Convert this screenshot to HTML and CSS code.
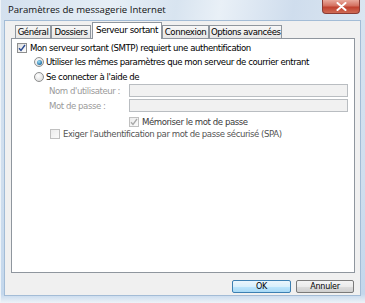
FILE: index.html
```html
<!DOCTYPE html>
<html lang="fr">
<head>
<meta charset="utf-8">
<title>Paramètres de messagerie Internet</title>
<link rel="stylesheet" href="styles.css">
</head>
<body>
<div class="window">
  <div class="titlebar">
    <span class="title">Paramètres de messagerie Internet</span>
    <span class="close"><svg width="11" height="9" viewBox="0 0 11 9"><path d="M1.5 1 L9.5 8 M9.5 1 L1.5 8" stroke="#fff" stroke-width="2" stroke-linecap="round"/></svg></span>
  </div>
  <div class="client">
    <div class="tabs">
      <div class="tab t1">Général</div>
      <div class="tab t2">Dossiers</div>
      <div class="tab t3 active">Serveur sortant</div>
      <div class="tab t4">Connexion</div>
      <div class="tab t5">Options avancées</div>
    </div>
    <div class="panel">
      <div class="row r1">
        <span class="cb"><svg width="8" height="8" viewBox="0 0 8 8"><path d="M1 4.2 L3 6.5 L7 1" fill="none" stroke="#2a4a90" stroke-width="1.4"/></svg></span>
        <span>Mon serveur sortant (SMTP) requiert une authentification</span>
      </div>
      <div class="row r2">
        <span class="radio on"></span>
        <span>Utiliser les mêmes paramètres que mon serveur de courrier entrant</span>
      </div>
      <div class="row r3">
        <span class="radio"></span>
        <span>Se connecter à l'aide de</span>
      </div>
      <div class="field f1">
        <span class="flabel">Nom d'utilisateur :</span>
        <span class="input"></span>
      </div>
      <div class="field f2">
        <span class="flabel">Mot de passe :</span>
        <span class="input"></span>
      </div>
      <div class="row small r4">
        <span class="cb dis"><svg width="8" height="8" viewBox="0 0 8 8"><path d="M1 4.2 L3 6.5 L7 1" fill="none" stroke="#a8a8a8" stroke-width="1.3"/></svg></span>
        <span>Mémoriser le mot de passe</span>
      </div>
      <div class="row small r5">
        <span class="cb dis"></span>
        <span>Exiger l'authentification par mot de passe sécurisé (SPA)</span>
      </div>
    </div>
    <div class="buttons">
      <span class="btn default">OK</span>
      <span class="btn">Annuler</span>
    </div>
  </div>
</div>
</body>
</html>
```

FILE: styles.css
```css
* { box-sizing: border-box; }
html, body { margin: 0; padding: 0; background: #fff; }

.window {
  width: 365px;
  height: 303px;
  display: flex;
  flex-direction: column;
  padding: 0 4px 7px 3px;
  background: linear-gradient(to bottom, #d6e3f0 0, #cfdeee 60%, #c3d7ec 97%, #eef3f8 100%);
  border-left: 1px solid #eef3f8;
  font-family: "DejaVu Sans", sans-serif;
  font-size: 8.6px;
  letter-spacing: -0.45px;
  color: #000;
}

.titlebar {
  height: 20px;
  display: flex;
  align-items: flex-start;
  background: linear-gradient(100deg, #d3e0ee 0%, #e6eef6 30%, #d8e4f0 48%, #e9f0f7 60%, #cfdded 80%, #dbe6f1 100%);
  margin: 0 -4px 0 -3px;
  padding: 0 5px 0 7px;
}

.title {
  font-family: "Open Sans", sans-serif;
  font-size: 9.6px;
  letter-spacing: 0;
  line-height: 20px;
  color: #111;
}

.close {
  margin-left: auto;
  width: 38px;
  height: 14px;
  display: flex;
  align-items: center;
  justify-content: center;
  border: 1px solid #8a3b34;
  border-top: none;
  border-radius: 0 0 4px 4px;
  background: linear-gradient(to bottom, #e9a99c 0%, #d3705f 45%, #c0412f 55%, #cf6b55 100%);
}

.client {
  flex: 1;
  display: flex;
  flex-direction: column;
  background: #f0f0f0;
  border: 1px solid #a3bcd6;
  padding: 0 5px 2px 6px;
}

.tabs {
  height: 17px;
  display: flex;
  align-items: flex-end;
  padding-left: 4px;
  position: relative;
  z-index: 1;
}

.tab {
  height: 13px;
  line-height: 12px;
  padding: 0 1px;
  text-align: center;
  border: 1px solid #8f969e;
  border-bottom: none;
  background: linear-gradient(to bottom, #f7f7f7, #e6e6e6);
  white-space: nowrap;
}
.t1 { width: 36px; }
.t2 { width: 40px; }
.t3 { width: 70px; }
.t4 { width: 47px; }
.t5 { width: 73px; }

.tab.active {
  height: 17px;
  line-height: 15px;
  margin: 0 0 -1px 1px;
  background: #fff;
  font-size: 8.8px;
}

.panel {
  flex: 1;
  background: #fff;
  border: 1px solid #8f969e;
  padding: 2px 6px 0 5px;
}

.row {
  height: 14px;
  display: flex;
  align-items: center;
  white-space: nowrap;
}
.row.small { height: 12px; }

.r2, .r3 { padding-left: 17px; }
.r3 { margin-top: 1px; }
.r4 { padding-left: 112px; margin-top: 4px; color: #3a3a3a; }
.r5 { padding-left: 33px; color: #555; }

.cb {
  width: 10px;
  height: 10px;
  flex: none;
  display: flex;
  align-items: center;
  justify-content: center;
  border: 1px solid #8e8f8f;
  background: linear-gradient(135deg, #dcdcdc, #ffffff);
  margin-right: 3px;
}
.cb.dis { border-color: #c0c0c0; background: linear-gradient(135deg, #ececec, #fafafa); }

.radio {
  width: 10px;
  height: 10px;
  flex: none;
  border-radius: 50%;
  border: 1px solid #8e8f8f;
  background: radial-gradient(circle at 40% 35%, #ffffff, #d4d4d4);
  margin-right: 2px;
  display: flex;
  align-items: center;
  justify-content: center;
}
.radio.on::after {
  content: "";
  width: 5px;
  height: 5px;
  border-radius: 50%;
  background: radial-gradient(circle at 40% 35%, #9ee0f8, #1d6aa0 75%);
}

.field {
  height: 13px;
  display: flex;
  align-items: center;
  padding-left: 32px;
  color: #9a9a9a;
}
.f2 { margin-top: 2px; }

.flabel { width: 80px; white-space: nowrap; }

.input {
  flex: 1;
  height: 13px;
  border: 1px solid #b9bdc1;
  background: #f1f1f1;
}

.buttons {
  display: flex;
  justify-content: flex-end;
  gap: 5px;
  margin-top: 7px;
  padding-right: 1px;
}

.btn {
  width: 58px;
  height: 13px;
  display: flex;
  align-items: center;
  justify-content: center;
  border: 1px solid #7a7a7a;
  border-radius: 2px;
  background: linear-gradient(to bottom, #f4f4f4 0%, #ebebeb 50%, #dddddd 51%, #cfcfcf 100%);
  font-size: 8px;
  letter-spacing: -0.2px;
}
.btn.default {
  width: 59px;
  border-color: #3c7fb1;
  background: linear-gradient(to bottom, #eaf6fd 0%, #d9f0fc 50%, #bee6fd 51%, #a7d9f5 100%);
}
```
